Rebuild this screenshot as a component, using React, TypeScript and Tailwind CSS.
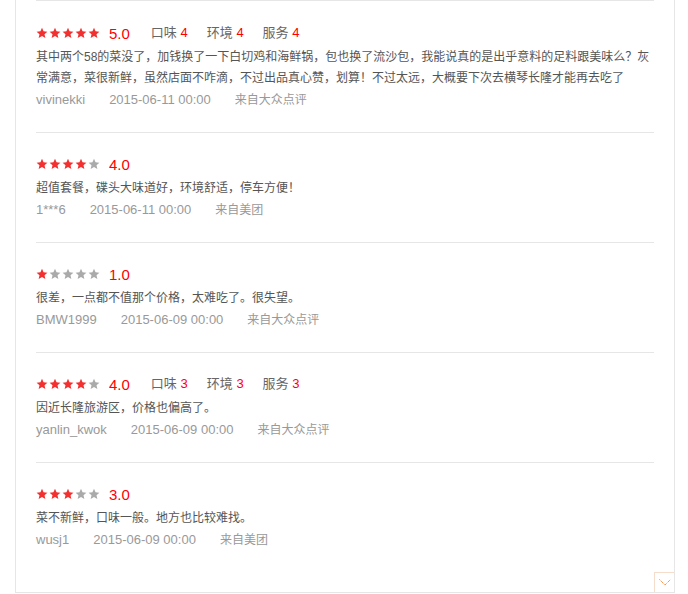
import React from 'react';

type Review = {
    score: number;
    subs?: { taste: number; env: number; service: number };
    text: string;
    user: string;
    date: string;
    source: string;
};

const REVIEWS: Review[] = [
    {
        score: 5,
        subs: { taste: 4, env: 4, service: 4 },
        text: '其中两个58的菜没了，加钱换了一下白切鸡和海鲜锅，包也换了流沙包，我能说真的是出乎意料的足料跟美味么？灰常满意，菜很新鲜，虽然店面不咋滴，不过出品真心赞，划算！不过太远，大概要下次去横琴长隆才能再去吃了',
        user: 'vivinekki',
        date: '2015-06-11 00:00',
        source: '来自大众点评',
    },
    { score: 4, text: '超值套餐，碟头大味道好，环境舒适，停车方便！', user: '1***6', date: '2015-06-11 00:00', source: '来自美团' },
    { score: 1, text: '很差，一点都不值那个价格，太难吃了。很失望。', user: 'BMW1999', date: '2015-06-09 00:00', source: '来自大众点评' },
    {
        score: 4,
        subs: { taste: 3, env: 3, service: 3 },
        text: '因近长隆旅游区，价格也偏高了。',
        user: 'yanlin_kwok',
        date: '2015-06-09 00:00',
        source: '来自大众点评',
    },
    { score: 3, text: '菜不新鲜，口味一般。地方也比较难找。', user: 'wusj1', date: '2015-06-09 00:00', source: '来自美团' },
];

const Star = ({ on }: { on: boolean }) => (
    <svg width="12" height="12" viewBox="0 0 24 24" className={on ? 'fill-[#f23030]' : 'fill-[#aaaaaa]'}>
        <path d="M12 1.5l3.1 7.1 7.7.7-5.8 5.1 1.7 7.6L12 18l-6.7 4 1.7-7.6-5.8-5.1 7.7-.7z" />
    </svg>
);

const SubScore = ({ label, value }: { label: string; value: number }) => (
    <span className="mr-[19px] text-[13px] text-[#666]">
        {label} <span className="text-[#f00]">{value}</span>
    </span>
);

const ReviewItem = ({ r, first }: { r: Review; first: boolean }) => (
    <div className={`border-t border-[#e6e6e6] pb-[21px] ${first ? 'pt-[21px]' : 'pt-[20px]'}`}>
        <div className="flex items-center h-[22px]">
            <div className="flex gap-[1px]">
                {[1, 2, 3, 4, 5].map(i => <Star key={i} on={i <= r.score} />)}
            </div>
            <span className="ml-[9px] text-[15px] text-[#f00] leading-none">{r.score.toFixed(1)}</span>
            {r.subs && (
                <div className="ml-[21px] flex">
                    <SubScore label="口味" value={r.subs.taste} />
                    <SubScore label="环境" value={r.subs.env} />
                    <SubScore label="服务" value={r.subs.service} />
                </div>
            )}
        </div>
        <p className="mt-[3px] text-[12px] leading-[21px] text-[#555]">{r.text}</p>
        <div className="flex items-center h-[22px] text-[#999]">
            <span className="mr-[24px] text-[13px]">{r.user}</span>
            <span className="mr-[24px] text-[13px]">{r.date}</span>
            <span className="text-[12px]">{r.source}</span>
        </div>
    </div>
);

export default function App() {
    return (
        <div className="bg-white h-[594px] w-[688px] font-['Liberation_Sans','Noto_Sans_CJK_SC',sans-serif]">
            <div className="relative ml-[15px] w-[660px] h-[593px] border-x border-b border-[#e6e6e6] px-[20px]">
                {REVIEWS.map((r, i) => <ReviewItem key={i} r={r} first={i === 0} />)}
                <button className="absolute right-0 bottom-0 w-[20px] h-[20px] border-l border-t border-[#f5dccb] flex items-center justify-center bg-white">
                    <svg width="12" height="7" viewBox="0 0 12 7">
                        <path d="M0.5 0.5L6 6L11.5 0.5" fill="none" stroke="#ff6600" strokeWidth="1" strokeDasharray="1 1" />
                    </svg>
                </button>
            </div>
        </div>
    );
}
